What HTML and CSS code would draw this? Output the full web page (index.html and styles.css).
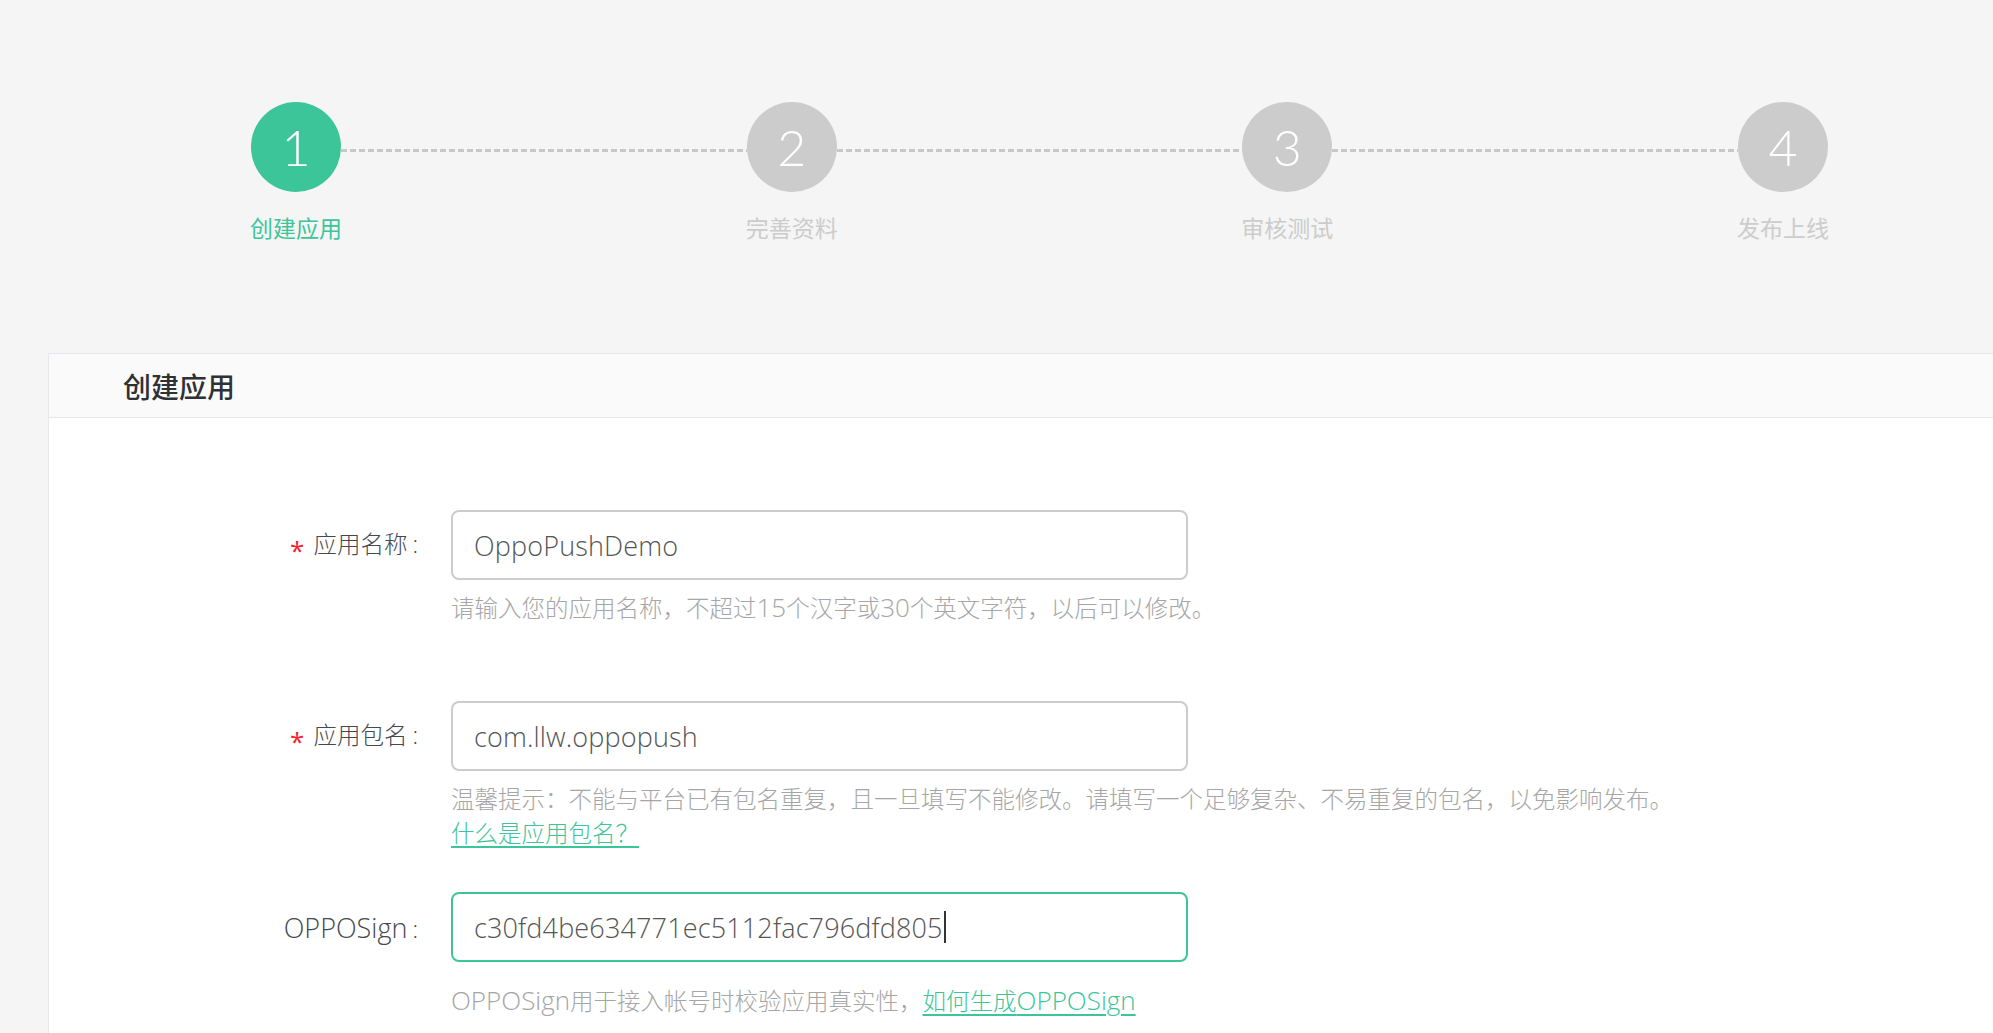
FILE: index.html
```html
<!DOCTYPE html>
<html lang="zh-CN">
<head>
<meta charset="utf-8">
<title>创建应用</title>
<link rel="stylesheet" href="styles.css">
</head>
<body>
<div class="page">
  <div class="steps">
    <div class="step step-active">
      <div class="step-circle">1</div>
      <div class="step-label">创建应用</div>
    </div>
    <div class="step-line"></div>
    <div class="step">
      <div class="step-circle">2</div>
      <div class="step-label">完善资料</div>
    </div>
    <div class="step-line"></div>
    <div class="step">
      <div class="step-circle">3</div>
      <div class="step-label">审核测试</div>
    </div>
    <div class="step-line"></div>
    <div class="step">
      <div class="step-circle">4</div>
      <div class="step-label">发布上线</div>
    </div>
  </div>

  <div class="panel">
    <div class="panel-header">
      <h2 class="panel-title">创建应用</h2>
    </div>
    <div class="panel-body">
      <div class="form-item form-item-name">
        <div class="form-row">
          <label class="form-label"><span class="req">*</span>应用名称<span class="colon">:</span></label>
          <div class="input">OppoPushDemo</div>
        </div>
        <div class="hint hint-name">请输入您的应用名称，不超过<span class="latin">15</span>个汉字或<span class="latin">30</span>个英文字符，以后可以修改。</div>
      </div>

      <div class="form-item form-item-pkg">
        <div class="form-row">
          <label class="form-label"><span class="req">*</span>应用包名<span class="colon">:</span></label>
          <div class="input">com.llw.oppopush</div>
        </div>
        <div class="hint hint-pkg">温馨提示：不能与平台已有包名重复，且一旦填写不能修改。请填写一个足够复杂、不易重复的包名，以免影响发布。<br><a class="link" href="#">什么是应用包名？</a></div>
      </div>

      <div class="form-item form-item-sign">
        <div class="form-row">
          <label class="form-label"><span class="latin">OPPOSign</span><span class="colon">:</span></label>
          <div class="input input-focus">c30fd4be634771ec5112fac796dfd805<span class="caret"></span></div>
        </div>
        <div class="hint hint-sign"><span class="latin">OPPOSign</span>用于接入帐号时校验应用真实性，<a class="link" href="#">如何生成<span class="latin">OPPOSign</span></a></div>
      </div>
    </div>
  </div>
</div>
</body>
</html>
```

FILE: styles.css
```css
* { box-sizing: border-box; }

html, body {
  margin: 0;
  padding: 0;
  background: #f5f5f5;
}

body {
  font-family: "Open Sans", "Noto Sans CJK SC", sans-serif;
  color: #4a4a4a;
  overflow: hidden;
}

.page {
  min-height: 1033px;
}

/* ---------- steps ---------- */
.steps {
  display: flex;
  align-items: flex-start;
  width: 1577px;
  margin-left: 251px;
  padding-top: 102px;
}

.step {
  width: 90px;
  display: flex;
  flex-direction: column;
  align-items: center;
  flex: none;
}

.step-circle {
  width: 90px;
  height: 90px;
  border-radius: 50%;
  background: #cccccc;
  color: #ffffff;
  font-family: Lato, sans-serif;
  font-weight: 300;
  font-size: 50px;
  line-height: 90px;
  text-align: center;
}

.step-label {
  margin-top: 20px;
  font-family: "Noto Sans CJK SC", sans-serif;
  font-size: 23px;
  line-height: 30px;
  white-space: nowrap;
  color: #cccccc;
}

.step-active .step-circle { background: #3dc59a; }
.step-active .step-label { color: #3dc59a; }

.step-line {
  flex: 1;
  height: 3px;
  margin-top: 47px;
  background: repeating-linear-gradient(to right, #c8c8c8 0 6px, transparent 6px 9px);
}

/* ---------- panel ---------- */
.panel {
  margin-top: 111px;
  margin-left: 48px;
  background: #ffffff;
  border-left: 1px solid #e6e8eb;
  border-top: 1px solid #e6e8eb;
  min-height: 700px;
}

.panel-header {
  height: 64px;
  background: #fafafa;
  border-bottom: 1px solid #e6e8eb;
  display: flex;
  align-items: center;
  padding-left: 74px;
}

.panel-title {
  margin: 0;
  font-family: "Noto Sans CJK SC", sans-serif;
  font-size: 28px;
  font-weight: 500;
  color: #2e3135;
  line-height: 40px;
}

.panel-body {
  padding-top: 92px;
}

/* ---------- form ---------- */
.form-row {
  display: flex;
  align-items: center;
}

.form-label {
  width: 369px;
  flex: none;
  text-align: right;
  font-size: 23.5px;
  font-weight: 300;
  line-height: 36px;
  padding-top: 3px;
  color: #45494f;
  white-space: nowrap;
}

.form-label .latin {
  font-size: 27px;
}

.req {
  color: #f5222d;
  margin-right: 9px;
  vertical-align: -7px;
  font-size: 26px;
  font-weight: 400;
}

.colon {
  margin-left: 5px;
}

.input {
  margin-left: 33px;
  width: 737px;
  height: 70px;
  border: 2px solid #cccccc;
  border-radius: 8px;
  padding-left: 21px;
  display: flex;
  align-items: center;
  font-size: 27px;
  font-weight: 300;
  letter-spacing: 0.15px;
  color: #555555;
  background: #ffffff;
}

.input-focus {
  border-color: #3dc59a;
}

.caret {
  display: inline-block;
  width: 2px;
  height: 32px;
  background: #333333;
  margin-left: 1px;
}

.hint {
  margin-left: 402px;
  font-size: 23.5px;
  font-weight: 300;
  line-height: 34px;
  color: #a6a6a6;
  white-space: nowrap;
}

.hint .latin {
  font-size: 26px;
}

.hint-name { margin-top: 10px; }
.hint-pkg { margin-top: 11px; }
.hint-sign { margin-top: 21px; }

.form-item-name { margin-bottom: 76px; }
.form-item-pkg { margin-bottom: 42px; }

.link {
  color: #3dc59a;
  text-decoration: underline;
  text-underline-offset: 4px;
}
```
